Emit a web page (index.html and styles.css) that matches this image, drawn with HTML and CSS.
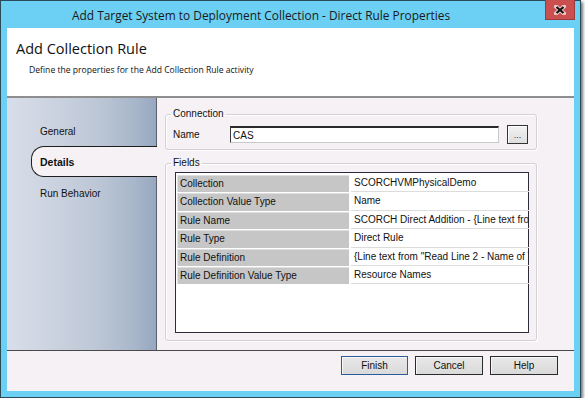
FILE: index.html
```html
<!DOCTYPE html>
<html>
<head>
<meta charset="utf-8">
<link rel="stylesheet" href="styles.css">
</head>
<body>
<div class="window">
  <div class="titlebar">
    <span class="title">Add Target System to Deployment Collection - Direct Rule Properties</span>
    <div class="close">
      <svg width="12" height="10" viewBox="0 0 12 10">
        <path d="M2 1.5 L10 8.5 M10 1.5 L2 8.5" stroke="#ffffff" stroke-width="4" stroke-linecap="square" fill="none" opacity="0.7"/>
        <path d="M2.5 2 L9.5 8 M9.5 2 L2.5 8" stroke="#111" stroke-width="2.2" fill="none"/>
      </svg>
    </div>
  </div>
  <div class="client">
    <div class="header">
      <div class="h-title">Add Collection Rule</div>
      <div class="h-sub">Define the properties for the Add Collection Rule activity</div>
    </div>
    <div class="main">
      <div class="nav">
        <div class="nav-item">General</div>
        <div class="nav-item active">Details</div>
        <div class="nav-item">Run Behavior</div>
      </div>
      <div class="panel">
        <fieldset class="group conn">
          <legend>Connection</legend>
          <div class="conn-row">
            <span class="lbl">Name</span>
            <div class="input">CAS</div>
            <div class="dots">...</div>
          </div>
        </fieldset>
        <fieldset class="group fields">
          <legend>Fields</legend>
          <div class="grid">
            <div class="k">Collection</div><div class="v">SCORCHVMPhysicalDemo</div>
            <div class="k">Collection Value Type</div><div class="v">Name</div>
            <div class="k">Rule Name</div><div class="v">SCORCH Direct Addition - {Line text from "Read Line 1"}</div>
            <div class="k">Rule Type</div><div class="v">Direct Rule</div>
            <div class="k">Rule Definition</div><div class="v">{Line text from "Read Line 2 - Name of Target"}</div>
            <div class="k">Rule Definition Value Type</div><div class="v">Resource Names</div>
          </div>
        </fieldset>
      </div>
    </div>
    <div class="footer">
      <div class="btn default">Finish</div>
      <div class="btn">Cancel</div>
      <div class="btn">Help</div>
    </div>
  </div>
</div>
</body>
</html>
```

FILE: styles.css
```css
html, body {
  margin: 0;
  padding: 0;
  background: #ffffff;
}

.window {
  position: relative;
  width: 581px;
  height: 398px;
  box-sizing: border-box;
  background: #6bd0f3;
  border: 1px solid #2a4a58;
  box-shadow: 2px 2px 3px rgba(0, 0, 0, 0.55);
  display: flex;
  flex-direction: column;
  font-family: "Liberation Sans", Arial, sans-serif;
}

.titlebar {
  height: 27px;
  flex: none;
  display: flex;
  align-items: center;
  padding-left: 71px;
}

.title {
  font-family: "Open Sans", "Noto Sans", sans-serif;
  font-size: 11.9px;
  color: #1a1a1a;
  white-space: nowrap;
  margin-top: 1px;
}

.close {
  position: absolute;
  top: -1px;
  right: 5px;
  width: 30px;
  height: 20px;
  box-sizing: border-box;
  background: #c9504f;
  border: 1px solid #9a3a3a;
  border-top: none;
  display: flex;
  align-items: center;
  justify-content: center;
}

.client {
  flex: 1;
  margin: 0 6px 6px 6px;
  background: #f5f1f4;
  display: flex;
  flex-direction: column;
  min-height: 0;
}

.header {
  height: 70px;
  flex: none;
  background: #ffffff;
  border-bottom: 2px solid #8e8e8e;
  box-sizing: border-box;
  padding: 10px 0 0 9px;
}

.h-title {
  font-family: "Open Sans", "Noto Sans", sans-serif;
  font-size: 14.5px;
  color: #111;
  line-height: 21px;
}

.h-sub {
  font-family: "Open Sans", "Noto Sans", sans-serif;
  font-size: 8.6px;
  color: #111;
  margin: 5px 0 0 13px;
}

.main {
  flex: 1;
  display: flex;
  min-height: 0;
}

.nav {
  width: 150px;
  flex: none;
  box-sizing: border-box;
  border-right: 1px solid #5c6068;
  background: linear-gradient(to right, #d8dee9 0%, #ccd3e0 30%, #bdc7d6 60%, #a9b7cb 85%, #96a7bf 100%);
  padding-top: 17px;
  display: flex;
  flex-direction: column;
  font-size: 10px;
  color: #111;
}

.nav-item {
  height: 31px;
  display: flex;
  align-items: center;
  padding-left: 33px;
  box-sizing: border-box;
  padding-top: 2px;
}

.nav-item.active {
  margin-left: 24px;
  margin-right: -1px;
  padding-left: 8px;
  padding-top: 1px;
  background: #f5f1f4;
  border: 1px solid #1e1e1e;
  border-right: none;
  border-radius: 13px 0 0 13px;
  font-weight: bold;
  font-size: 10.5px;
}

.panel {
  flex: 1;
  padding: 10px 0 0 8px;
  display: flex;
  flex-direction: column;
  font-size: 10px;
  color: #111;
}

.group {
  margin: 0;
  width: 372px;
  box-sizing: border-box;
  border: 1px solid #d3d0d6;
  box-shadow: inset 1px 1px 0 #ffffff, 1px 1px 0 #ffffff;
  border-radius: 3px;
  padding: 0;
}

.group legend {
  padding: 0 2px;
  margin-left: 5px;
  font-size: 10px;
  line-height: 12px;
}

.conn {
  height: 42px;
}

.conn-row {
  display: flex;
  align-items: center;
  padding: 5px 0 0 7px;
}

.lbl {
  width: 57px;
}

.input {
  width: 269px;
  height: 17px;
  box-sizing: border-box;
  background: #ffffff;
  border: 1px solid #c9c9c9;
  border-top: 2px solid #2a2a2a;
  border-left: 1px solid #3a3a3a;
  padding: 1px 3px 0 2px;
  font-size: 10px;
  line-height: 13px;
}

.dots {
  width: 21px;
  height: 19px;
  margin-left: 8px;
  box-sizing: border-box;
  border: 1px solid #333;
  background: linear-gradient(#f2f2f2, #dedede);
  box-shadow: inset 1px 1px 0 #fff;
  font-size: 9px;
  text-align: center;
  line-height: 18px;
  color: #333;
}

.fields {
  margin-top: 7px;
  height: 184px;
}

.grid {
  margin: 3px 0 0 9px;
  width: 354px;
  height: 161px;
  box-sizing: border-box;
  background: #ffffff;
  border: 1px solid #2c2c3a;
  padding: 2px 0 0 1px;
  display: grid;
  grid-template-columns: 172px 178px;
  grid-auto-rows: 17.4px;
  row-gap: 1px;
  column-gap: 2px;
  align-content: start;
}

.k {
  background: #c6c6c6;
  border-top: 1px solid #dedede;
  border-left: 1px solid #e2e2e2;
  box-sizing: border-box;
  padding-left: 2px;
  line-height: 15px;
  white-space: nowrap;
  overflow: hidden;
}

.v {
  border-bottom: 1px solid #dcdcdc;
  box-sizing: border-box;
  padding-left: 3px;
  line-height: 16px;
  white-space: nowrap;
  overflow: hidden;
}

.footer {
  height: 41px;
  flex: none;
  box-sizing: border-box;
  border-top: 1px solid #4a4a4a;
  display: flex;
  justify-content: flex-end;
  align-items: flex-start;
  gap: 7px;
  padding: 5px 16px 0 0;
}

.btn {
  width: 68px;
  height: 19px;
  box-sizing: border-box;
  border: 1px solid #2a2a2a;
  background: linear-gradient(#e8e8e8, #dadada);
  box-shadow: inset 1px 1px 0 #f8f8f8;
  font-size: 10px;
  text-align: center;
  line-height: 17px;
  color: #111;
}

.btn.default {
  border: 1px solid #2a5c9a;
  width: 67px;
}
```
